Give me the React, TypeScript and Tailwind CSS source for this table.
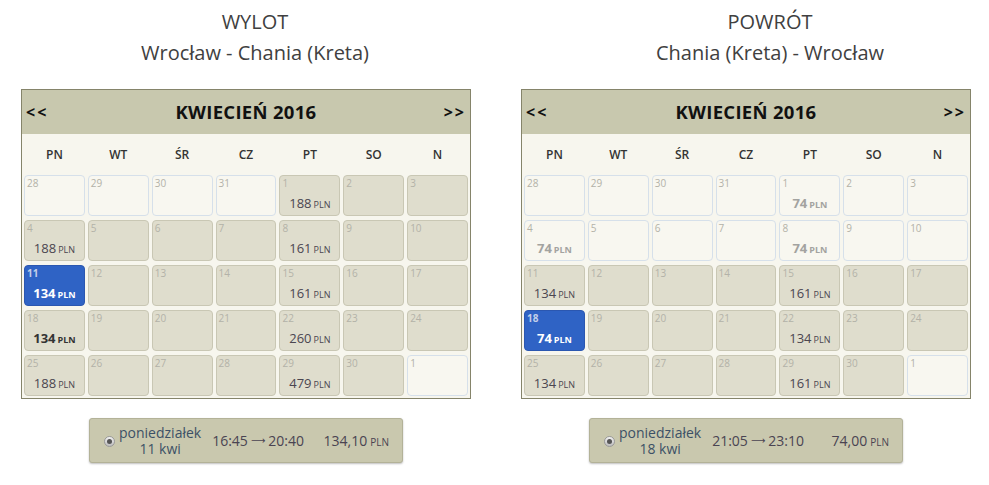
import React from "react";

type Cell = {
  day: number;
  price?: string;
  faded?: boolean;
  bold?: boolean;
  selected?: boolean;
};

const DAYS = ["PN", "WT", "ŚR", "CZ", "PT", "SO", "N"];

const outbound: Cell[] = [
  { day: 28, faded: true },
  { day: 29, faded: true },
  { day: 30, faded: true },
  { day: 31, faded: true },
  { day: 1, price: "188" },
  { day: 2 },
  { day: 3 },
  { day: 4, price: "188" },
  { day: 5 },
  { day: 6 },
  { day: 7 },
  { day: 8, price: "161" },
  { day: 9 },
  { day: 10 },
  { day: 11, price: "134", selected: true },
  { day: 12 },
  { day: 13 },
  { day: 14 },
  { day: 15, price: "161" },
  { day: 16 },
  { day: 17 },
  { day: 18, price: "134", bold: true },
  { day: 19 },
  { day: 20 },
  { day: 21 },
  { day: 22, price: "260" },
  { day: 23 },
  { day: 24 },
  { day: 25, price: "188" },
  { day: 26 },
  { day: 27 },
  { day: 28 },
  { day: 29, price: "479" },
  { day: 30 },
  { day: 1, faded: true },
];

const inbound: Cell[] = [
  { day: 28, faded: true },
  { day: 29, faded: true },
  { day: 30, faded: true },
  { day: 31, faded: true },
  { day: 1, price: "74", faded: true, bold: true },
  { day: 2, faded: true },
  { day: 3, faded: true },
  { day: 4, price: "74", faded: true, bold: true },
  { day: 5, faded: true },
  { day: 6, faded: true },
  { day: 7, faded: true },
  { day: 8, price: "74", faded: true, bold: true },
  { day: 9, faded: true },
  { day: 10, faded: true },
  { day: 11, price: "134" },
  { day: 12 },
  { day: 13 },
  { day: 14 },
  { day: 15, price: "161" },
  { day: 16 },
  { day: 17 },
  { day: 18, price: "74", selected: true },
  { day: 19 },
  { day: 20 },
  { day: 21 },
  { day: 22, price: "134" },
  { day: 23 },
  { day: 24 },
  { day: 25, price: "134" },
  { day: 26 },
  { day: 27 },
  { day: 28 },
  { day: 29, price: "161" },
  { day: 30 },
  { day: 1, faded: true },
];

function DayCell({ cell }: { cell: Cell }) {
  let box = "border-[#c9c7b4] bg-[#dfddcd]";
  if (cell.faded) box = "border-[#d6e0ea] bg-[#f8f7f0]";
  if (cell.selected) box = "border-[#2b57b0] bg-[#2f63c5]";

  let price = "text-[#4b4650] font-normal";
  if (cell.bold) price = "text-[#333] font-bold";
  if (cell.faded) price = "text-[#a3a3a0] font-bold";
  if (cell.selected) price = "text-white font-bold";

  return (
    <div className={`h-[41px] rounded-[4px] border ${box} flex flex-col`}>
      <div
        className={`pl-[2px] pt-[1px] text-[10px] leading-[13px] ${
          cell.selected ? "text-[#c3d0ea] font-bold" : "text-[#b3b2a8]"
        }`}
      >
        {cell.day}
      </div>
      {cell.price && (
        <div className={`mt-[4px] text-center leading-[16px] ${price}`}>
          <span className="text-[13px]">{cell.price}</span>
          <span className="text-[9px] ml-[2px]">PLN</span>
        </div>
      )}
    </div>
  );
}

function Calendar({ cells }: { cells: Cell[] }) {
  return (
    <div className="w-[450px] border border-[#85846a] bg-[#f7f6ee]">
      <div className="h-[44px] bg-[#c8c8ae] flex items-center justify-between px-[4px] text-[#111]">
        <span className="text-[16px] font-bold tracking-[2px]">&lt;&lt;</span>
        <span className="text-[18.5px] font-bold tracking-[0.3px]">KWIECIEŃ 2016</span>
        <span className="text-[16px] font-bold tracking-[2px]">&gt;&gt;</span>
      </div>
      <div className="grid grid-cols-7 gap-x-[3px] px-[2px] h-[41px] items-center">
        {DAYS.map((d) => (
          <div key={d} className="text-center text-[12px] font-semibold text-[#333]">
            {d}
          </div>
        ))}
      </div>
      <div className="grid grid-cols-7 gap-x-[3px] gap-y-[4px] px-[2px] pb-[2px]">
        {cells.map((c, i) => (
          <DayCell key={i} cell={c} />
        ))}
      </div>
    </div>
  );
}

function FlightBar({
  date,
  from,
  to,
  price,
}: {
  date: string;
  from: string;
  to: string;
  price: string;
}) {
  return (
    <div className="w-[314px] h-[45px] rounded-[3px] border border-[#b3b298] bg-[#c9c8ae] shadow-[0_1px_2px_rgba(0,0,0,0.25)] flex items-center pl-[14px] text-[14px]">
      <span className="w-[11px] h-[11px] rounded-full bg-gradient-to-b from-[#f2f2f2] to-[#bdbdbd] border border-[#9a9a9a] flex items-center justify-center mt-[2px]">
        <span className="w-[5px] h-[5px] rounded-full bg-[#555]" />
      </span>
      <div className="ml-[4px] text-center leading-[16px] text-[#3c5166]">
        <div>poniedziałek</div>
        <div>{date}</div>
      </div>
      <div className="ml-[11px] text-[#4a4452] flex items-center">
        <span>{from}</span>
        <span
          className="mx-[3px] text-[10px]"
          style={{ fontFamily: '"DejaVu Sans", sans-serif' }}
        >
          ⟶
        </span>
        <span>{to}</span>
      </div>
      <div className="ml-auto mr-[13px] text-[#4a4452]">
        {price}
        <span className="text-[10px] ml-[3px]">PLN</span>
      </div>
    </div>
  );
}

function Column({
  title,
  route,
  titleWidth,
  cells,
  date,
  from,
  to,
  price,
}: {
  title: string;
  route: string;
  titleWidth: string;
  cells: Cell[];
  date: string;
  from: string;
  to: string;
  price: string;
}) {
  return (
    <div className="flex flex-col w-[450px]">
      <div className={`${titleWidth} text-center text-[20px] leading-[31px] text-[#404040] pt-[6px] h-[89px]`}>
        <div>{title}</div>
        <div>{route}</div>
      </div>
      <Calendar cells={cells} />
      <div className="flex justify-center mt-[19px]">
        <FlightBar date={date} from={from} to={to} price={price} />
      </div>
    </div>
  );
}

export default function App() {
  return (
    <div
      className="w-[989px] h-[485px] bg-white flex pl-[21px] gap-[50px]"
      style={{ fontFamily: '"Open Sans", "Liberation Sans", sans-serif' }}
    >
      <Column
        title="WYLOT"
        route="Wrocław - Chania (Kreta)"
        titleWidth="w-[468px]"
        cells={outbound}
        date="11 kwi"
        from="16:45"
        to="20:40"
        price="134,10"
      />
      <Column
        title="POWRÓT"
        route="Chania (Kreta) - Wrocław"
        titleWidth="w-[498px]"
        cells={inbound}
        date="18 kwi"
        from="21:05"
        to="23:10"
        price="74,00"
      />
    </div>
  );
}
